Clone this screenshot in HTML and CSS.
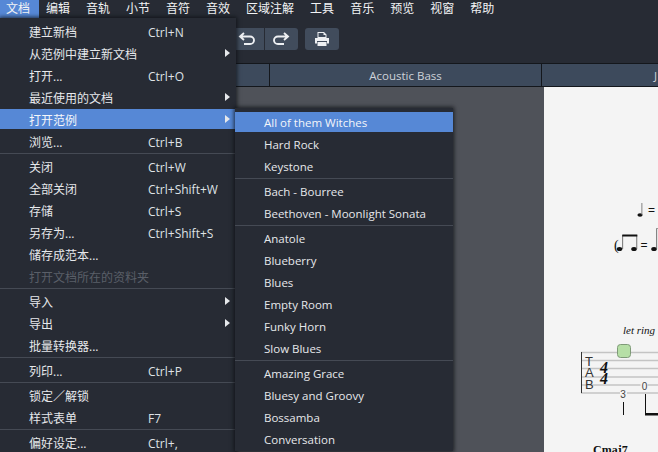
FILE: index.html
```html
<!DOCTYPE html>
<html lang="zh">
<head>
<meta charset="utf-8">
<title>Score editor</title>
<link rel="stylesheet" href="styles.css">
</head>
<body>
<div class="app">
  <nav class="menubar">
    <span class="top first active">文档</span><span class="top">编辑</span><span class="top">音轨</span><span class="top">小节</span><span class="top">音符</span><span class="top">音效</span><span class="top">区域注解</span><span class="top">工具</span><span class="top">音乐</span><span class="top">预览</span><span class="top">视窗</span><span class="top">帮助</span>
  </nav>
  <div class="toolbar">
    <div class="btn-group">
      <button class="tool"><svg width="18" height="14" viewBox="0 0 18 14"><path d="M6 1 2 4.500 6 8M2.500 4.500H12c2.400 0 4 1.700 4 3.700s-1.600 3.800-4 3.800H6" fill="none" stroke="#eef0f3" stroke-width="1.900"/></svg></button>
      <button class="tool"><svg width="18" height="14" viewBox="0 0 18 14"><path d="M12 1l4 3.500L12 8M15.500 4.500H6c-2.400 0-4 1.700-4 3.700S3.600 12 6 12h6" fill="none" stroke="#eef0f3" stroke-width="1.900"/></svg></button>
    </div>
    <button class="tool solo"><svg width="16" height="16" viewBox="0 0 16 16"><path fill-rule="evenodd" d="M3.500 1h6.500l2.500 2.500V7h-9z M4.500 2v4h7V4h-2V2z M1 7h14v5.500h-2V10H3v2.500H1z M3.500 11h9v4h-9z" fill="#eef0f3"/></svg></button>
  </div>
  <div class="tracks">
    <div class="track t1"></div>
    <div class="track t2">Acoustic Bass</div>
    <div class="track t3">J</div>
  </div>
  <main class="workspace">
    <div class="sheet">
      <svg class="score" width="114" height="365" viewBox="544 87 114 365">
        <g fill="#111">
          <ellipse cx="640" cy="215" rx="2.600" ry="1.800"/><rect x="641.500" y="203" width=".8" height="12" fill="#666"/>
          <text x="648" y="214" class="eq">=</text>
          <text x="614" y="250" class="paren">(</text>
          <ellipse cx="619.500" cy="249" rx="2.800" ry="2"/><ellipse cx="634" cy="249" rx="2.800" ry="2"/>
          <rect x="622.300" y="235" width=".8" height="14" fill="#555"/><rect x="636.400" y="235" width=".8" height="14" fill="#555"/>
          <rect x="622.300" y="234.500" width="15" height="2"/>
          <text x="640.500" y="249" class="eq">=</text>
          <ellipse cx="654" cy="249" rx="2.800" ry="2"/><rect x="656.300" y="229" width=".8" height="20" fill="#555"/>
          <rect x="656" y="228" width="3" height="1" fill="#999"/>
          <text x="623" y="334" class="ring">let ring</text>
        </g>
        <g stroke="#c4c4c4" stroke-width="1.400">
          <path d="M581 352.500H658M581 360.500H658M581 368.500H658M581 377H658M581 385H658M581 393H658"/>
        </g>
        <path d="M581.500 352V393" stroke="#333" stroke-width="1"/>
        <text x="585" y="366" class="tab">T</text><text x="585" y="377" class="tab">A</text><text x="585" y="389" class="tab">B</text>
        <text x="600" y="373" class="sig">4</text><text x="600" y="384" class="sig">4</text>
        <rect x="617.500" y="344.500" width="13" height="13" rx="3" fill="#b6dfa6" stroke="#7f9a78"/>
        <rect x="620" y="388" width="7" height="10" fill="#f4f4f4"/>
        <text x="623" y="398" class="fret">3</text>
        <rect x="640.500" y="381" width="7" height="10" fill="#f4f4f4"/>
        <text x="644.500" y="389.500" class="fret">0</text>
        <rect x="623" y="402" width="1" height="13" fill="#111"/>
        <rect x="645" y="394" width="1" height="21" fill="#111"/>
        <rect x="645" y="413" width="13" height="2.500" fill="#111"/>
        <text x="593" y="454" class="chord">Cmaj7</text>
      </svg>
    </div>
  </main>

  <div class="menu main-menu">
    <div class="item"><span class="lab">建立新档</span><span class="key">Ctrl+N</span></div>
    <div class="item"><span class="lab">从范例中建立新文档</span><i class="arrow"></i></div>
    <div class="item"><span class="lab">打开...</span><span class="key">Ctrl+O</span></div>
    <div class="item"><span class="lab">最近使用的文档</span><i class="arrow"></i></div>
    <div class="item on"><span class="lab">打开范例</span><i class="arrow"></i></div>
    <div class="item"><span class="lab">浏览...</span><span class="key">Ctrl+B</span></div>
    <hr class="sep">
    <div class="item"><span class="lab">关闭</span><span class="key">Ctrl+W</span></div>
    <div class="item"><span class="lab">全部关闭</span><span class="key">Ctrl+Shift+W</span></div>
    <div class="item"><span class="lab">存储</span><span class="key">Ctrl+S</span></div>
    <div class="item"><span class="lab">另存为...</span><span class="key">Ctrl+Shift+S</span></div>
    <div class="item"><span class="lab">储存成范本...</span></div>
    <div class="item off"><span class="lab">打开文档所在的资料夹</span></div>
    <hr class="sep">
    <div class="item"><span class="lab">导入</span><i class="arrow"></i></div>
    <div class="item"><span class="lab">导出</span><i class="arrow"></i></div>
    <div class="item"><span class="lab">批量转换器...</span></div>
    <hr class="sep">
    <div class="item"><span class="lab">列印...</span><span class="key">Ctrl+P</span></div>
    <hr class="sep">
    <div class="item"><span class="lab">锁定／解锁</span></div>
    <div class="item"><span class="lab">样式表单</span><span class="key">F7</span></div>
    <hr class="sep">
    <div class="item"><span class="lab">偏好设定...</span><span class="key">Ctrl+,</span></div>
  </div>

  <div class="menu sub-menu">
    <div class="item on"><span class="lab">All of them Witches</span></div>
    <div class="item"><span class="lab">Hard Rock</span></div>
    <div class="item"><span class="lab">Keystone</span></div>
    <hr class="sep">
    <div class="item"><span class="lab">Bach - Bourree</span></div>
    <div class="item"><span class="lab">Beethoven - Moonlight Sonata</span></div>
    <hr class="sep">
    <div class="item"><span class="lab">Anatole</span></div>
    <div class="item"><span class="lab">Blueberry</span></div>
    <div class="item"><span class="lab">Blues</span></div>
    <div class="item"><span class="lab">Empty Room</span></div>
    <div class="item"><span class="lab">Funky Horn</span></div>
    <div class="item"><span class="lab">Slow Blues</span></div>
    <hr class="sep">
    <div class="item"><span class="lab">Amazing Grace</span></div>
    <div class="item"><span class="lab">Bluesy and Groovy</span></div>
    <div class="item"><span class="lab">Bossamba</span></div>
    <div class="item"><span class="lab">Conversation</span></div>
  </div>
</div>
</body>
</html>
```
FILE: styles.css
```css
* { box-sizing: border-box; }
html, body { margin: 0; padding: 0; height: 100%; overflow: hidden; }
body { background: #272b34; font: 12px "Open Sans", "Noto Sans CJK SC", sans-serif; color: #e6e8eb; }
.app { position: relative; width: 658px; height: 452px; overflow: hidden; display: flex; flex-direction: column; }

.menubar { display: flex; height: 18px; flex: none; background: #272b34; }
.top { padding: 0 8px; line-height: 18px; color: #f2f3f5; white-space: nowrap; }
.top.first { padding: 0 9px 0 6px; margin-right: -1px; }
.top.active { background: #5688d6; }

.toolbar { display: flex; gap: 7px; flex: none; height: 45px; padding: 10px 0 0 230px; }
.btn-group { display: flex; gap: 1px; }
.tool { width: 33.500px; height: 22px; padding: 0; border: 0; background: #414c5c; display: flex; align-items: center; justify-content: center; }
.btn-group .tool:first-child { border-radius: 3px 0 0 3px; }
.btn-group .tool:last-child { border-radius: 0 3px 3px 0; }
.tool.solo { width: 34px; border-radius: 3px; }

.tracks { display: flex; flex: none; height: 24px; background: #3d4a5c; border-top: 1px solid #14171c; border-bottom: 1px solid #14171c; font-size: 11.500px; }
.track { line-height: 23px; text-align: center; color: #cdd2d9; border-right: 1px solid #14171c; }
.t1 { width: 270px; }
.t2 { width: 272px; }
.t3 { flex: 1; border-right: 0; text-align: left; padding-left: 112px; }

.workspace { flex: 1; display: flex; justify-content: flex-end; background: #4f5259; min-height: 0; }
.sheet { width: 114px; background: #f4f4f4; }
.score { display: block; }
.eq { font: 12px "Liberation Sans", sans-serif; }
.paren { font: 14px "Liberation Serif", serif; }
.ring { font: italic 11px "Liberation Serif", serif; }
.tab { font: 13px "Liberation Sans", sans-serif; fill: #333; }
.sig { font: italic 900 16px "Liberation Serif", serif; fill: #111; }
.fret { font: 10px "Liberation Sans", sans-serif; fill: #444; text-anchor: middle; }
.chord { font: bold 12px "Liberation Serif", serif; fill: #111; }

.menu { position: absolute; background: #272b34; box-shadow: 0 0 4px 1px rgba(10, 12, 16, .75); }
.main-menu { left: 0; top: 18px; width: 236px; padding-top: 3px; z-index: 1; }
.sub-menu { left: 235px; top: 108px; width: 218px; padding-top: 4px; z-index: 2; font-size: 11.500px; }
.item { display: flex; align-items: center; position: relative; height: 20px; margin-bottom: 2px; padding-left: 29px; white-space: nowrap; color: #e6e8eb; }
.main-menu .item { padding-top: 2px; }
.item.on { background: #5688d6; color: #f4f6fa; }
.item.off { color: #5a5f68; }
.lab { flex: none; }
.key { position: absolute; left: 148px; color: #dfe2e6; }
.arrow { position: absolute; left: 225px; top: 6px; width: 0; height: 0; border-left: 5px solid #e6e8eb; border-top: 4px solid transparent; border-bottom: 4px solid transparent; }
.sep { height: 1px; margin: 0 0 2px; border: 0; background: #454a54; }
```
